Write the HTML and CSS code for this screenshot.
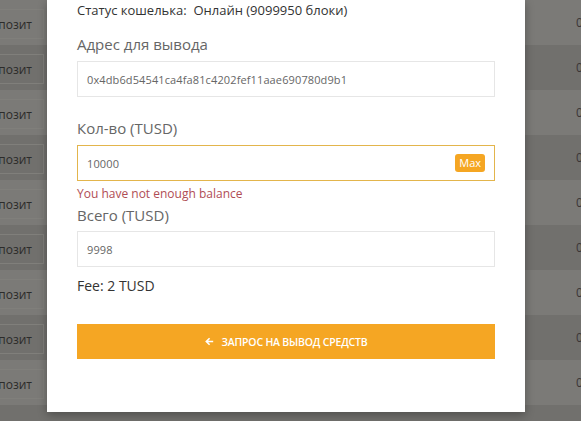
FILE: index.html
```html
<!DOCTYPE html>
<html lang="ru">
<head>
<meta charset="utf-8">
<title>Вывод средств</title>
<link rel="stylesheet" href="styles.css">
</head>
<body>
<div class="table">
  <div class="row light"><div class="cell-left"><span class="dep">Депозит</span></div><div class="cell-mid"></div><div class="cell-right">0</div></div>
  <div class="row dark"><div class="cell-left"><span class="dep">Депозит</span></div><div class="cell-mid"></div><div class="cell-right">0</div></div>
  <div class="row light"><div class="cell-left"><span class="dep">Депозит</span></div><div class="cell-mid"></div><div class="cell-right">0</div></div>
  <div class="row dark"><div class="cell-left"><span class="dep">Депозит</span></div><div class="cell-mid"></div><div class="cell-right">0</div></div>
  <div class="row light"><div class="cell-left"><span class="dep">Депозит</span></div><div class="cell-mid"></div><div class="cell-right">0</div></div>
  <div class="row dark"><div class="cell-left"><span class="dep">Депозит</span></div><div class="cell-mid"></div><div class="cell-right">0</div></div>
  <div class="row light"><div class="cell-left"><span class="dep">Депозит</span></div><div class="cell-mid"></div><div class="cell-right">0</div></div>
  <div class="row dark"><div class="cell-left"><span class="dep">Депозит</span></div><div class="cell-mid"></div><div class="cell-right">0</div></div>
  <div class="row light"><div class="cell-left"><span class="dep">Депозит</span></div><div class="cell-mid"></div><div class="cell-right">0</div></div>
  <div class="row dark short"></div>
</div>

<div class="modal">
  <div class="status">Статус кошелька:&nbsp; Онлайн (9099950 блоки)</div>

  <div class="label first">Адрес для вывода</div>
  <div class="input">0x4db6d54541ca4fa81c4202fef11aae690780d9b1</div>

  <div class="label second">Кол-во (TUSD)</div>
  <div class="input focus"><span>10000</span><span class="max">Max</span></div>
  <div class="error">You have not enough balance</div>

  <div class="label third">Всего (TUSD)</div>
  <div class="input">9998</div>

  <div class="fee">Fee: 2 TUSD</div>

  <div class="submit">
    <svg class="arrow" width="9" height="9" viewBox="0 0 9 9" aria-hidden="true"><path d="M8.2 4.5H1.4M4.6 1.2L1.3 4.5l3.3 3.3" fill="none" stroke="#fff" stroke-width="1.6"/></svg>
    <span>ЗАПРОС НА ВЫВОД СРЕДСТВ</span>
  </div>
</div>
</body>
</html>
```

FILE: styles.css
```css
html, body {
  margin: 0;
  padding: 0;
}
body {
  width: 581px;
  height: 421px;
  overflow: hidden;
  background: #6f6e6b;
  font-family: "Open Sans", "Liberation Sans", sans-serif;
  position: relative;
}

.table {
  display: flex;
  flex-direction: column;
  height: 421px;
  overflow: hidden;
}
.row {
  height: 45px;
  flex: none;
  display: flex;
  align-items: center;
}
.row.short { height: 16px; }
.row.light { background: #7b7a77; }
.row.dark { background: #71706d; }

.cell-left {
  width: 47px;
  height: 100%;
  overflow: hidden;
  display: flex;
  justify-content: flex-end;
  align-items: center;
  padding-right: 3px;
  box-sizing: border-box;
  flex: none;
}
.dep {
  flex: none;
  height: 30px;
  line-height: 29px;
  padding: 0 11px 0 14px;
  border: 1px solid #807f7b;
  font-size: 12px;
  color: #2c2b2a;
  white-space: nowrap;
  box-sizing: border-box;
  margin-top: 2px;
}
.cell-mid { flex: 1; }
.cell-right {
  width: 5px;
  flex: none;
  padding-left: 5px;
  white-space: nowrap;
  font-size: 12px;
  color: #3a3536;
}

.modal {
  position: absolute;
  left: 47px;
  top: 0;
  width: 478px;
  height: 412px;
  background: #fff;
  box-shadow: 0 3px 9px rgba(0, 0, 0, 0.3);
  padding: 0 30px;
  box-sizing: border-box;
  display: flex;
  flex-direction: column;
}

.status {
  margin-top: 1px;
  font-size: 13px;
  line-height: 18px;
  color: #333;
}
.label {
  font-size: 15px;
  line-height: 20px;
  color: #666;
}
.label.first { margin-top: 15px; }
.label.second { margin-top: 21px; }
.label.third { margin-top: 3px; }

.input {
  margin-top: 7px;
  height: 36px;
  border: 1px solid #e6e6e6;
  box-sizing: border-box;
  padding: 0 9px;
  display: flex;
  align-items: center;
  justify-content: space-between;
  font-size: 11px;
  letter-spacing: 0.12px;
  color: #666;
}
.input.focus {
  border-color: #e3b54c;
}
.label.third + .input { margin-top: 6px; }

.max {
  background: #f5a623;
  color: #fff;
  font-size: 11px;
  letter-spacing: 0;
  line-height: 18px;
  height: 18px;
  padding: 0 4px;
  border-radius: 3px;
}

.error {
  margin-top: 5px;
  font-size: 12px;
  line-height: 16px;
  color: #b04d55;
}

.fee {
  margin-top: 9px;
  font-size: 14px;
  line-height: 20px;
  color: #333;
}

.submit {
  margin-top: 28px;
  height: 35px;
  background: #f5a623;
  color: #fff;
  display: flex;
  align-items: center;
  justify-content: center;
  gap: 8px;
  font-size: 10.5px;
  font-weight: 600;
  letter-spacing: -0.2px;
}
.arrow { display: block; }
```
